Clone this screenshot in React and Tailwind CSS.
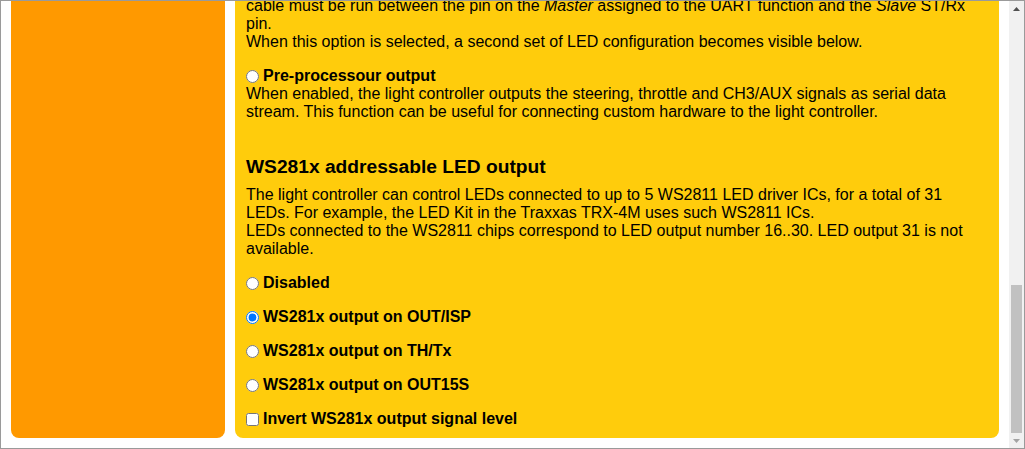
import React from 'react';

const Option = ({ label, checked, type = 'radio', name = 'ws281x' }) => (
    <label className="mt-4 flex h-[18px] items-center gap-[4px] font-bold">
        <input type={type} name={type === 'radio' ? name : undefined} defaultChecked={checked} className="m-0 size-[13px] shrink-0" />
        {label}
    </label>
);

const Scrollbar = () => (
    <div className="flex w-[15px] shrink-0 flex-col bg-[#f1f1f1]">
        <div className="flex h-[15px] items-center justify-center">
            <svg width="7" height="4" viewBox="0 0 7 4"><polygon points="0,4 3.5,0 7,4" fill="#505050" /></svg>
        </div>
        <div className="flex flex-1 flex-col justify-end px-[2px]">
            <div className="h-[148px] bg-[#c1c1c1]" />
        </div>
        <div className="flex h-[15px] items-center justify-center">
            <svg width="7" height="4" viewBox="0 0 7 4"><polygon points="0,0 7,0 3.5,4" fill="#a3a3a3" /></svg>
        </div>
    </div>
);

export default function App() {
    return (
        <div className="flex h-[449px] w-[1025px] overflow-hidden border border-[#9a9a9a] bg-white font-['Liberation_Sans',Arial,sans-serif] text-black">
            <div className="flex min-w-0 flex-1 flex-col justify-end overflow-hidden px-[10px] pb-[10px]">
                <div className="flex gap-[10px]">
                    {/* sidebar */}
                    <div className="w-[214px] shrink-0 rounded-lg bg-[#ff9900]" />

                    {/* settings panel */}
                    <div className="flex min-w-0 flex-1 flex-col rounded-lg bg-[#ffcc0c] px-[11px] pb-[10px] text-[16px] leading-[18px]">
                        <label className="mt-4 flex h-[18px] items-center gap-[4px] font-bold">
                            <input type="radio" name="serial" defaultChecked className="m-0 size-[13px] shrink-0" />
                            Slave light controller
                        </label>
                        <p>
                            When enabled, the light controller forwards its light state to a second light controller. A serial
                            <br />
                            cable must be run between the pin on the <i>Master</i> assigned to the UART function and the <i>Slave</i> ST/Rx pin.
                            <br />
                            When this option is selected, a second set of LED configuration becomes visible below.
                        </p>

                        <label className="mt-4 flex h-[18px] items-center gap-[4px] font-bold">
                            <input type="radio" name="serial" className="m-0 size-[13px] shrink-0" />
                            Pre-processour output
                        </label>
                        <p>
                            When enabled, the light controller outputs the steering, throttle and CH3/AUX signals as serial data stream. This function can be useful for connecting custom hardware to the light controller.
                        </p>

                        <h3 className="mt-[35px] mb-[8px] text-[19.2px] leading-[22px] font-bold">WS281x addressable LED output</h3>
                        <p>
                            The light controller can control LEDs connected to up to 5 WS2811 LED driver ICs, for a total of 31 LEDs. For example, the LED Kit in the Traxxas TRX-4M uses such WS2811 ICs.
                            <br />
                            LEDs connected to the WS2811 chips correspond to LED output number 16..30. LED output 31 is not available.
                        </p>

                        <Option label="Disabled" />
                        <Option label="WS281x output on OUT/ISP" checked />
                        <Option label="WS281x output on TH/Tx" />
                        <Option label="WS281x output on OUT15S" />
                        <Option label="Invert WS281x output signal level" type="checkbox" />
                    </div>
                </div>
            </div>
            <Scrollbar />
        </div>
    );
}
